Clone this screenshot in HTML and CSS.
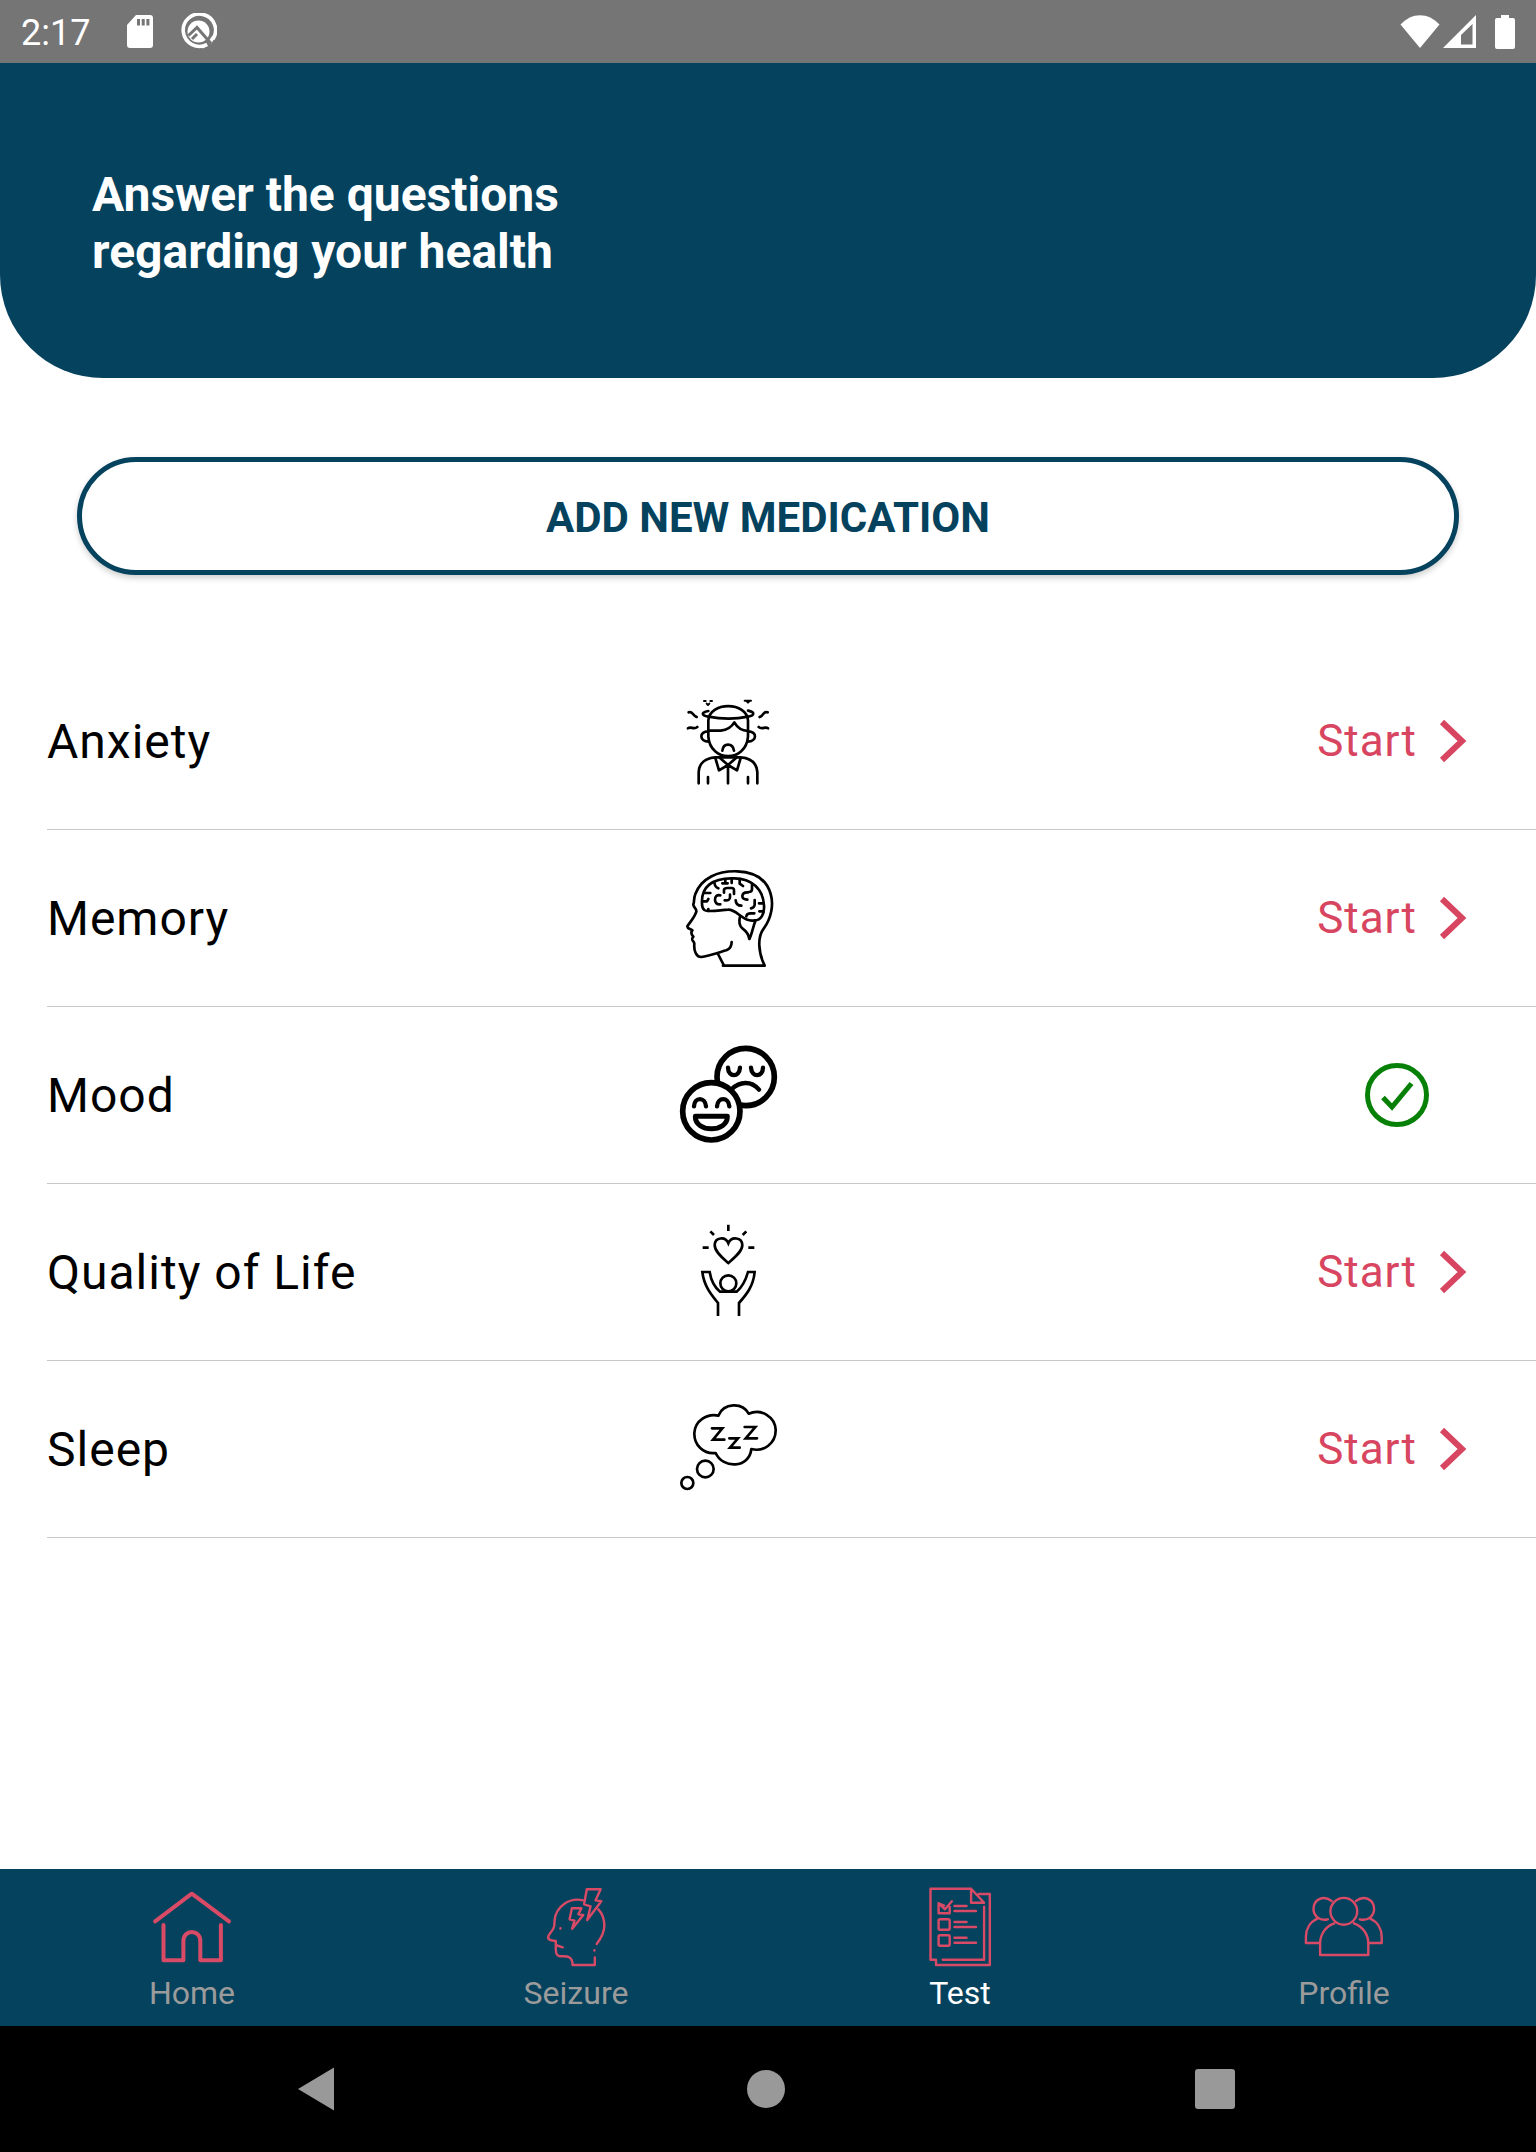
FILE: index.html
```
<!DOCTYPE html>
<html lang="en">
<head>
  <meta charset="UTF-8" />
  <meta name="viewport" content="width=device-width, initial-scale=1" />
  <title>Health Tests</title>
  <link rel="stylesheet" href="styles.css">
</head>
<body>
  <div class="screen">
    <div class="status-bar">
      <span class="clock">2:17</span>
      <svg class="sd" width="26" height="33" viewBox="0 0 26 33">
        <path fill="#fff" fill-rule="evenodd" d="M9 0H23a3 3 0 0 1 3 3V30a3 3 0 0 1-3 3H3a3 3 0 0 1-3-3V10zM10 4v6.500h3V4zM14.700 4v6.500h3V4zM19.400 4v6.500h3V4z"/>
      </svg>
      <svg class="debug" width="37" height="37" viewBox="0 0 37 37">
        <path fill="none" stroke="#fff" stroke-width="3.600" d="M27 31.500A16.200 16.200 0 1 1 33 26"/>
        <path fill="none" stroke="#fff" stroke-width="3.400" d="M27 31.500L22 34M29.500 30L33.500 24"/>
        <circle cx="18.500" cy="18.500" r="11" fill="#fff"/>
        <path fill="none" stroke="#757575" stroke-width="3" d="M8.500 22.500L17 14.500L31 30.500M12 26l5-5"/>
      </svg>
      <div class="status-right">
        <svg width="40" height="34" viewBox="0 0 40 34"><path fill="#fff" d="M.5 9.500C12-3 28-3 39.500 9.500L20 33z"/></svg>
        <svg width="33" height="34" viewBox="0 0 33 34"><path fill="#fff" fill-rule="evenodd" d="M0 33L33 0V33zM18 29.500H29.500V9L18 20z"/></svg>
        <svg class="battery" width="20" height="34" viewBox="0 0 20 34"><path fill="#fff" d="M6 0h8v3h4a2 2 0 0 1 2 2v27a2 2 0 0 1-2 2H2a2 2 0 0 1-2-2V5a2 2 0 0 1 2-2h4z"/></svg>
      </div>
    </div>

    <div class="header">
      <h1>Answer the questions<br>regarding your health</h1>
    </div>

    <button class="add-btn">ADD NEW MEDICATION</button>

    <div class="list">
      <div class="row">
        <span class="name">Anxiety</span>
        <svg class="icon" viewBox="0 -81 420 528">
          <g class="ink">
            <path d="M145 154V122C147 64 262 64 264 122V170C258 248 151 248 145 170z"/>
            <path d="M145 93C122 97 124 106 145 110C182 117 230 117 264 110C284 106 286 97 264 92"/>
            <path d="M145 152H182C204 149 215 141 223 127C232 143 244 152 264 153"/>
            <path d="M145 154C117 154 117 184 146 185M264 154C292 154 292 184 263 185"/>
            <path d="M187 212C190 188 218 188 222 212"/>
            <path d="M116 310V277C117 248 138 234 166 232H242C271 234 290 248 292 277V310"/>
            <path d="M166 234L177 271L204 255L231 271L242 234M180 234L204 255L228 234M204 255V310M144 291V310M264 291V310"/>
            <path d="M86 97C98 92 96 106 110 111M84 145C94 137 100 151 112 141M323 97C310 92 312 106 299 111M324 145C314 137 308 151 296 141"/>
            <path d="M132 63H137M151 63H156M140 71L144 75L148 71M254 62H273M261 65L264 68L267 65" stroke-width="6"/>
          </g>
        </svg>
        <span class="action">Start <svg class="chevron" width="28" height="44" viewBox="0 0 28 44"><path d="M3 3L23 22L3 41"/></svg></span>
      </div>
      <div class="row">
        <span class="name">Memory</span>
        <svg class="icon" viewBox="0 -60 420 528">
          <g class="ink">
            <path d="M189 347H314C294 306 292 261 311 236C333 207 342 165 332 132C319 86 284 66 232 64C173 62 124 85 106 132C100 148 104 154 100 163C99 172 111 176 109 185C104 202 91 215 82 229C81 236 91 236 97 241C90 250 96 255 100 260C90 271 103 272 103 281C101 303 109 322 124 321C143 318 181 306 199 301C212 296 215 288 215 276M174 312L192 347"/>
            <path d="M126 161C123 111 156 84 218 85C276 83 310 119 312 166C314 192 303 211 284 211C265 215 254 207 244 199C231 190 219 178 204 179C181 180 145 188 133 180C126 174 126 169 126 161z"/>
            <path d="M240 200C236 215 239 229 248 236C262 246 266 254 268 267C275 255 278 234 286 213"/>
            <path d="M133 129H151M128 154H141L145 147M145 183V177M163 96C164 107 168 113 175 115M187 100H203M196 89V98M215 89V99M239 87V101L249 108M276 101V118Q275 126 266 126M192 128V119Q193 114 202 114H215Q222 114 222 121V132M181 136Q165 133 165 149Q165 163 181 163M194 151Q210 153 210 142V134M227 151Q228 167 244 167M264 127Q248 126 247 138Q247 148 262 149M284 150V164Q283 173 273 175M297 160H311M259 199Q260 191 270 190H283M298 184H308"/>
          </g>
        </svg>
        <span class="action">Start <svg class="chevron" width="28" height="44" viewBox="0 0 28 44"><path d="M3 3L23 22L3 41"/></svg></span>
      </div>
      <div class="row">
        <span class="name">Mood</span>
        <svg class="icon" viewBox="0 -66 420 528">
          <g class="ink bold">
            <circle cx="257" cy="144" r="86"/>
            <path d="M204 116C205 146 238 146 240 116M273 116C275 146 308 146 309 116M214 181C240 157 273 154 297 182" stroke-width="13"/>
            <circle cx="154" cy="247" r="86" fill="#fff"/>
            <path d="M102 232C103 203 136 203 138 232M171 232C173 203 206 203 208 232" stroke-width="13"/>
            <path d="M106 262H202C203 312 105 312 106 262z" stroke-width="15"/>
          </g>
        </svg>
        <span class="done"><svg width="64" height="64" viewBox="0 0 64 64"><circle cx="32" cy="32" r="29.500"/><path d="M18 34.500L27 44L46.500 20.500"/></svg></span>
      </div>
      <div class="row">
        <span class="name">Quality of Life</span>
        <svg class="icon" viewBox="0 -75 420 528">
          <g class="ink square">
            <path d="M205 162C187 146 164 128 164 108C165 85 196 81 205 103C214 81 246 85 247 108C247 128 223 146 205 162z"/>
            <path d="M205 47V66M151 67L162 78M259 67L248 78M128 116H146M265 116H283"/>
            <circle cx="205" cy="223" r="24"/>
            <path d="M174 321V282C154 257 132 232 127 189H149C153 214 163 234 180 248H230C247 234 257 214 264 189H284C280 232 259 257 237 282V321"/>
          </g>
        </svg>
        <span class="action">Start <svg class="chevron" width="28" height="44" viewBox="0 0 28 44"><path d="M3 3L23 22L3 41"/></svg></span>
      </div>
      <div class="row">
        <span class="name">Sleep</span>
        <svg class="icon" viewBox="0 -84 420 528">
          <g class="ink" stroke-width="10">
            <path d="M175 80C191 41 247 39 266 74C304 57 345 84 347 122C348 163 311 190 274 180C268 239 188 240 167 192C130 196 102 168 103 132C105 96 140 73 175 80z"/>
            <circle cx="136" cy="240" r="25"/>
            <circle cx="82" cy="282" r="18"/>
            <path d="M156 118H187L159 152H193M254 114H286L257 148H291" stroke-linejoin="miter"/>
            <path d="M208 148H234L210 176H239" stroke-width="8" stroke-linejoin="miter"/>
          </g>
        </svg>
        <span class="action">Start <svg class="chevron" width="28" height="44" viewBox="0 0 28 44"><path d="M3 3L23 22L3 41"/></svg></span>
      </div>
    </div>

    <div class="tabs">
      <div class="tab">
        <svg class="tab-icon home" viewBox="0 0 80 80">
          <path d="M3.100 34.300L39.800 6.700L77 34.300M11.500 38V73.300H31.400V54C31.400 42 48.300 42 48.300 54V73.300H68.900V38"/>
        </svg>
        <span>Home</span>
      </div>
      <div class="tab">
        <svg class="tab-icon" viewBox="0 0 80 80">
          <path d="M50.800 2.300H64.600L59.600 13.300L65.300 14.300L51.200 33L54.600 19.300L48.100 17.300zM35.900 21.300H45.400L42.400 27.300L47.300 28L36.200 41.700L38.500 33.700L33.600 32.300z"/>
          <path d="M47 13.300C33 10 20 20 18.600 33C18.500 38 18.500 40 17.100 42C15 46 12.500 47 12.100 50.500C12.500 54 17 53.500 19.800 54V63C20 68 22 69.500 26 69.300C32 69 36.600 70 36.600 78H58.800V70.500M19.800 58L26.700 60.300M60.700 57C66 50 68.400 45 68.400 38C68 31 66 26 62.300 22.300M24.400 41.200v.3M58.400 63.200v.3"/>
        </svg>
        <span>Seizure</span>
      </div>
      <div class="tab active">
        <svg class="tab-icon" viewBox="0 0 80 80">
          <path d="M51.100 1.800H10.500V72.700H16V78H69.800V7H58.700M51.100 1.800V15.700H64.100zM64.100 19.700V72.700H22.800"/>
          <path d="M29.700 20V26.300H18.600V16.300L25 22.300L31.900 14.300M18.600 16.300L24 18.500M20 32.300h8.300q1.400 0 1.400 1.400v7.600q0 1.400-1.400 1.400H20q-1.400 0-1.400-1.400v-7.600q0-1.400 1.400-1.400zM20 48.300h8.300q1.400 0 1.400 1.400v7.600q0 1.400-1.400 1.400H20q-1.400 0-1.400-1.400v-7.600q0-1.400 1.400-1.400z"/>
          <path d="M34.500 19H46.500M34.500 24H56M34.500 35H46.500M34.500 40H56M34.500 50.700H46.500M34.500 55.700H56"/>
        </svg>
        <span>Test</span>
      </div>
      <div class="tab">
        <svg class="tab-icon" viewBox="0 0 80 80">
          <circle cx="39.800" cy="24.300" r="13.400"/>
          <path d="M30.300 36.300C22 39 16.100 47 16.100 56.300V68H64.300V56.300C64.300 47 58 39 49.800 36.300"/>
          <path d="M27.600 14C19 7.500 9.500 13 9.500 22C9.500 29 16 34.500 23.800 32.300M13.400 31.700C6 35 1.900 42 1.900 49.700V56H15.300"/>
          <path d="M52 14C60.600 7.500 70.100 13 70.100 22C70.100 29 63.600 34.500 55.800 32.300M66.200 31.700C73.600 35 77.700 42 77.700 49.700V56H64.300"/>
        </svg>
        <span>Profile</span>
      </div>
    </div>

    <div class="nav-bar">
      <svg width="40" height="46" viewBox="0 0 40 46"><path d="M37 1.500V44.500L1 23z"/></svg>
      <svg width="40" height="40" viewBox="0 0 40 40"><circle cx="20" cy="20" r="19"/></svg>
      <svg width="40" height="40" viewBox="0 0 40 40"><rect width="40" height="40" rx="3"/></svg>
    </div>
  </div>
</body>
</html>
```
FILE: styles.css
```
* {
  box-sizing: border-box;
}
body {
  font-family: Roboto, sans-serif;
  background: #fff;
  margin: 0;
}
.screen {
  display: flex;
  flex-direction: column;
  width: 1536px;
  height: 2152px;
}
svg {
  display: block;
  flex: none;
}
.status-bar {
  display: flex;
  align-items: center;
  height: 63px;
  padding: 0 21px;
  background: #757575;
  color: #fff;
}
.clock {
  width: 106px;
  font-size: 36px;
  line-height: 36px;
  padding-top: 3px;
}
.debug {
  margin-left: 27px;
}
.status-right {
  display: flex;
  gap: 3px;
  margin-left: auto;
}
.battery {
  margin-left: 16px;
}
.header {
  height: 315px;
  padding: 103px 92px 0;
  background: #05425e;
  border-radius: 0 0 103px 103px;
  color: #fff;
}
h1 {
  margin: 0;
  font-size: 48px;
  font-weight: bold;
  line-height: 57px;
}
.add-btn {
  height: 118px;
  margin: 79px 77px 78px;
  padding: 2px 0 0;
  border: 5px solid #05425e;
  border-radius: 59px;
  background: #fff;
  box-shadow: 0 3px 6px rgba(0,0,0,0.2);
  color: #05425e;
  font-family: inherit;
  font-size: 42px;
  font-weight: bold;
}
.list {
  flex: 1;
  padding-left: 47px;
}
.row {
  display: grid;
  grid-template-columns: 613px 140px 1fr;
  align-items: center;
  height: 177px;
  border-bottom: 1px solid #c8c8c8;
}
.name {
  font-size: 48px;
  letter-spacing: 1px;
  color: #000;
}
.icon {
  width: 140px;
  height: 176px;
}
.ink {
  fill: none;
  stroke: #000;
  stroke-width: 8px;
  stroke-linecap: round;
  stroke-linejoin: round;
}
.ink.bold {
  stroke-width: 17px;
}
.ink.square {
  stroke-linecap: butt;
  stroke-linejoin: miter;
}
.action {
  display: flex;
  align-items: center;
  justify-content: flex-end;
  gap: 22px;
  padding-right: 69px;
  color: #d84560;
  font-size: 44px;
  letter-spacing: 1px;
}
.chevron {
  fill: none;
  stroke: #d84560;
  stroke-width: 6px;
}
.done {
  display: flex;
  justify-content: flex-end;
  padding-right: 107px;
  fill: none;
  stroke: #078007;
  stroke-width: 5px;
}
.tabs {
  display: grid;
  grid-template-columns: repeat(4, 1fr);
  height: 157px;
  background: #05425e;
}
.tab {
  display: flex;
  flex-direction: column;
  align-items: center;
  padding-top: 18px;
  color: #9b9b9b;
  font-size: 32px;
  line-height: 38px;
}
.tab span {
  margin-top: 7px;
}
.tab.active {
  color: #fff;
}
.tab-icon {
  width: 80px;
  height: 80px;
  fill: none;
  stroke: #d94a66;
  stroke-width: 2.4px;
  stroke-linecap: round;
  stroke-linejoin: round;
}
.tab-icon.home {
  stroke-width: 4px;
}
.nav-bar {
  display: flex;
  align-items: center;
  justify-content: space-between;
  height: 126px;
  padding: 0 301px 0 297px;
  background: #000;
  fill: #999;
}
```
